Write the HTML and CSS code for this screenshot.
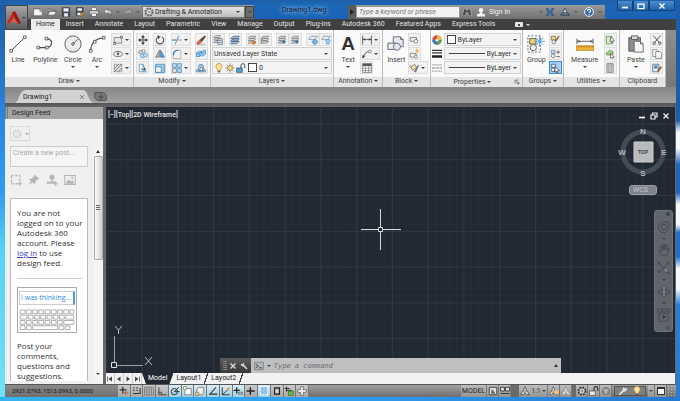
FILE: index.html
```html
<!DOCTYPE html>
<html lang="en">
<head>
<meta charset="utf-8">
<title>Drawing1.dwg</title>
<link rel="stylesheet" href="styles.css">
</head>
<body>
<svg class="defs" aria-hidden="true">
  <defs>
    <symbol id="new" viewBox="0 0 16 16"><path d="M1 3h10l4 4v7H1z" fill="#f4f4f4" stroke="#555"/><path d="M11 3v4h4" fill="#ccc" stroke="#666"/></symbol>
    <symbol id="open" viewBox="0 0 16 16"><path d="M1 3h5l1 2h5v3" fill="#ddd" stroke="#444"/><path d="M1 13L4 7h11l-3 6z" fill="#f2f2f2" stroke="#444"/></symbol>
    <symbol id="save" viewBox="0 0 16 16"><path d="M2 1h12v14H2z" fill="#46525e" stroke="#333"/><path d="M4 2h8v5H4zM5 10h6v5H5z" fill="#eef"/></symbol>
    <symbol id="saveas" viewBox="0 0 16 16"><path d="M2 1h11v12H2z" fill="#46525e" stroke="#333"/><path d="M4 2h7v4H4zM4 9h5v4H4z" fill="#eef"/><path d="M8 14l5-6 2 2-5 5z" fill="#f0a030" stroke="#704010" stroke-width=".6"/></symbol>
    <symbol id="print" viewBox="0 0 16 16"><path d="M4 1h8v5H4z" fill="#fff" stroke="#555"/><path d="M1 6h14v6H1z" fill="#e4e4e4" stroke="#444"/><path d="M4 10h8v5H4z" fill="#fff" stroke="#444"/></symbol>
    <symbol id="undo" viewBox="0 0 16 16"><path d="M2 7l5-5v3c5 0 7 3 7 9-2-4-4-5-7-5v3z" fill="#e8e8e8" stroke="#444" stroke-width=".8"/></symbol>
    <symbol id="redo" viewBox="0 0 16 16"><path d="M14 7L9 2v3c-5 0-7 3-7 9 2-4 4-5 7-5v3z" fill="#aaa" stroke="#666" stroke-width=".8"/></symbol>
    <symbol id="gear" viewBox="0 0 16 16"><circle cx="8" cy="8" r="6" fill="none" stroke="currentColor" stroke-width="2.4" stroke-dasharray="2.7 2"/><circle cx="8" cy="8" r="4.6" fill="#f5f5f5" stroke="currentColor"/><circle cx="8" cy="8" r="1.8" fill="none" stroke="currentColor"/></symbol>
    <symbol id="binoc" viewBox="0 0 16 16"><path d="M4 2h2.500v3h3V2H12l3 9v3h-5V9H6v5H1v-3z" fill="#444" stroke="#ddd" stroke-width=".7"/></symbol>
    <symbol id="user" viewBox="0 0 16 16"><circle cx="8" cy="5" r="3.600" fill="#f4f4f4"/><path d="M6.500 8h3v2l5 1.500V15h-13v-3.500l5-1.500z" fill="#f4f4f4"/></symbol>
    <symbol id="exchange" viewBox="0 0 16 16"><path d="M1 2h4l3 3 3-3h4l-4 6 4 6h-4l-3-3-3 3H1l4-6z" fill="#24508c"/><path d="M5 4l3 3 3-3M5 12l3-3 3 3" stroke="#a9c6ea" fill="none"/></symbol>
    <symbol id="cloudtri" viewBox="0 0 16 16"><path d="M8 2l3.500 7h-7z" fill="#dfe8f4" stroke="#23415f" stroke-width="1.300"/><path d="M4 9l-3 4h14l-3-4" fill="none" stroke="#23415f" stroke-width="1.600"/></symbol>
    <symbol id="help" viewBox="0 0 16 16"><circle cx="8" cy="8" r="7" fill="#3b6da5" stroke="#f4f4f4" stroke-width="1.500"/><path d="M5.500 6.200c0-3.200 5-3.200 5 0 0 2-2.500 1.600-2.500 3.600" stroke="#fff" stroke-width="1.700" fill="none"/><circle cx="8" cy="12" r="1" fill="#fff"/></symbol>
    <symbol id="line" viewBox="0 0 20 20"><path d="M2.500 17.500L17 3" stroke="#444" stroke-width="1.100"/><path d="M1 16h3v3H1zM16 1h3v3h-3z" fill="#eee" stroke="#444" stroke-width=".8"/></symbol>
    <symbol id="poly" viewBox="0 0 20 20"><path d="M3 14h9c7-1 7-9 0-10" fill="none" stroke="#444" stroke-width="1.200"/><path d="M1 12.500h3v3H1zM10.500 12.500h3v3h-3zM10 2.500h3v3h-3z" fill="#eee" stroke="#444" stroke-width=".8"/></symbol>
    <symbol id="circle" viewBox="0 0 20 20"><circle cx="10" cy="10" r="9" fill="#ececec" stroke="#555"/><path d="M10 10l6-6" stroke="#555"/><circle cx="10" cy="10" r="1.400" fill="#fff" stroke="#444"/></symbol>
    <symbol id="arc" viewBox="0 0 20 20"><path d="M3 18Q3 4 18 3" fill="none" stroke="#444" stroke-width="1.200"/><path d="M1.500 16h3v3h-3zM6 6h3v3H6zM16 1.500h3v3h-3z" fill="#eee" stroke="#444" stroke-width=".8"/></symbol>
    <symbol id="rect" viewBox="0 0 16 16"><path d="M2 4h12v9H2z" fill="#e9e9e9" stroke="#555"/><path d="M1 12h3v3H1zM12 2h3v3h-3z" fill="#fff" stroke="#333"/></symbol>
    <symbol id="ellipse" viewBox="0 0 16 16"><ellipse cx="8" cy="8" rx="7" ry="4.200" fill="#eee" stroke="#444"/><path d="M6 8h4M8 4v6" stroke="#333" stroke-width="1.400"/></symbol>
    <symbol id="hatch" viewBox="0 0 16 16"><path d="M2 2h12v12H2z" fill="#ddd" stroke="#555" stroke-dasharray="2 1"/><path d="M2 9l7-7M2 14L14 2M8 14l6-6" stroke="#555"/></symbol>
    <symbol id="move" viewBox="0 0 16 16"><path d="M8 2v12M2 8h12" stroke="#333" stroke-width="1.300"/><path d="M8 0l3 4H5zM8 16l3-4H5zM0 8l4-3v6zM16 8l-4-3v6z" fill="#333"/><path d="M6.500 6.500h3v3h-3z" fill="#fff" stroke="#333"/></symbol>
    <symbol id="rotate" viewBox="0 0 16 16"><path d="M5 3a6 6 0 1 0 6 0" fill="none" stroke="#555" stroke-width="1.800"/><path d="M4 0l5 2.500L5 7z" fill="#555"/></symbol>
    <symbol id="trim" viewBox="0 0 16 16"><path d="M0 8h7" stroke="#2c79b8" stroke-width="1.600"/><path d="M9 8h7" stroke="#555" stroke-width="1.200" stroke-dasharray="2 1"/><path d="M5 15L11 1" stroke="#2c79b8" stroke-width="1.200"/></symbol>
    <symbol id="erase" viewBox="0 0 16 16"><path d="M6 8l8-7 1.500 1.500L9 11z" fill="#6b4a30" stroke="#333" stroke-width=".7"/><path d="M1 12l5-4 3 3-4 4H2z" fill="#e3684c" stroke="#8a3a28" stroke-width=".7"/><path d="M6 15h8" stroke="#999"/></symbol>
    <symbol id="copy" viewBox="0 0 16 16"><circle cx="4" cy="5" r="3" fill="#ddd" stroke="#666"/><circle cx="9" cy="3.500" r="2.500" fill="#eee" stroke="#666"/><circle cx="7" cy="11" r="3" fill="#cfe5f8" stroke="#2c79b8"/><circle cx="12" cy="10" r="3" fill="#cfe5f8" stroke="#2c79b8"/></symbol>
    <symbol id="mirror" viewBox="0 0 16 16"><path d="M7 2v11H1z" fill="#bbb" stroke="#555"/><path d="M9 2v11h6z" fill="#5ba3de" stroke="#215f96"/></symbol>
    <symbol id="fillet" viewBox="0 0 16 16"><path d="M2 15V9q0-7 7-7h5v13z" fill="#f2f2f2" stroke="#999"/><path d="M2 10q0-8 8-8" stroke="#1f75bb" stroke-width="1.800" fill="none"/></symbol>
    <symbol id="explode" viewBox="0 0 16 16"><path d="M1 6l4-2h4v5l-3 3H1zM9 4l3-2h3v6l-3 3H9" fill="#a8d2f4" stroke="#1f75bb"/><path d="M1 7h5v5M6 7l3-3M10 6h3" stroke="#1f75bb" fill="none"/></symbol>
    <symbol id="stretch" viewBox="0 0 16 16"><path d="M2 2h6v12H2z" fill="#f7f7f7" stroke="#2c79b8"/><path d="M8 2l5 12H8" fill="#b8dcf7" stroke="#2c79b8"/><path d="M5 10h6M9 8l3 2-3 2" stroke="#222" fill="none"/></symbol>
    <symbol id="scale" viewBox="0 0 16 16"><path d="M1 2h14v13H1z" fill="#9fcdf0" stroke="#1f6eaf"/><path d="M1 6h9v9H1z" fill="#f5f5f5" stroke="#1f6eaf"/></symbol>
    <symbol id="array" viewBox="0 0 16 16"><path d="M1 1h6v6H1zM9 1h6v6H9zM9 9h6v6H9z" fill="#b8dcf7" stroke="#2c79b8"/><path d="M1 9h6v6H1z" fill="#eee" stroke="#555"/></symbol>
    <symbol id="offset" viewBox="0 0 16 16"><path d="M1 14h14v-3q-3 0-3-4 0-5-4-5T4 7q0 4-3 4z" fill="#a8d2f4" stroke="#1f6eaf"/><path d="M4 12q3-1 3-4 0-2 2-2t1 2q0 3 2 4z" fill="#fff" stroke="#444"/></symbol>
    <symbol id="layers" viewBox="0 0 16 16"><path d="M5 2h9l-3 3H2zM5 6h9l-3 3H2zM5 10h9l-3 3H2z" fill="#f5f5f5" stroke="#555"/><path d="M2 5v9" stroke="#555"/></symbol>
    <symbol id="lprops" viewBox="0 0 16 16"><path d="M4 1h8L9 4H1zM4 5h8L9 8H1zM4 9h4v3H1z" fill="#f5f5f5" stroke="#555"/><path d="M8 6h7v9H8z" fill="#e6f1fa" stroke="#456"/><path d="M9 9h5M9 12h5" stroke="#456"/></symbol>
    <symbol id="lblue" viewBox="0 0 16 16"><path d="M5 2h10l-4 4H1zM5 6h10l-4 4H1zM5 10h10l-4 4H1z" fill="#9fcdf0" stroke="#335"/></symbol>
    <symbol id="lorange" viewBox="0 0 16 16"><path d="M5 2h9l-3 3H2zM5 6h9l-3 3H2zM5 10h9l-3 3H2z" fill="#f5f5f5" stroke="#555"/><path d="M7 13l4-4 4 3-4 4z" fill="#d9772b"/></symbol>
    <symbol id="larrow" viewBox="0 0 16 16"><path d="M5 2h9l-3 3H2zM5 6h9l-3 3H2zM5 10h9l-3 3H2z" fill="#f5f5f5" stroke="#555"/><path d="M7 11l6-3v6z" fill="#1f75bb"/></symbol>
    <symbol id="lfreeze" viewBox="0 0 16 16"><path d="M4 2h11l-4 5H1z" fill="#eef4f8" stroke="#678"/><circle cx="11" cy="11" r="3.500" fill="#cfe9fb" stroke="#3187c6" stroke-width="1.500"/><path d="M11 6v10M6 11h10" stroke="#3187c6"/></symbol>
    <symbol id="loff" viewBox="0 0 16 16"><path d="M4 2h11l-4 5H1z" fill="#eef4f8" stroke="#678"/><path d="M9 12q-2-2-1-4 3-3 6 0 1 2-1 4v2H9z" fill="#a8d2f4" stroke="#3187c6"/></symbol>
    <symbol id="bulb" viewBox="0 0 16 16"><path d="M5.500 10Q3 8 3 5.500a5 5 0 0 1 10 0Q13 8 10.500 10v2h-5z" fill="#fbe39a" stroke="#a8803a"/><path d="M6 13.500h4M7 15.500h2" stroke="#555" stroke-width="1.500"/></symbol>
    <symbol id="sun" viewBox="0 0 16 16"><path d="M8 0v16M0 8h16M2.500 2.500l11 11M13.500 2.500l-11 11" stroke="#8a7a50"/><circle cx="8" cy="8" r="4" fill="#fbd98a" stroke="#7a6a40"/></symbol>
    <symbol id="lock" viewBox="0 0 16 16"><path d="M1 8h9v7H1z" fill="#5a9fd4" stroke="#1d4f7c"/><path d="M8 8V4q0-3 3-3t3 3v4" fill="none" stroke="#345" stroke-width="1.500"/></symbol>
    <symbol id="lockgray" viewBox="0 0 16 16"><path d="M1 8h9v7H1z" fill="#eee" stroke="#333"/><path d="M8 8V4q0-3 3-3t3 3v4" fill="none" stroke="#333" stroke-width="1.800"/></symbol>
    <symbol id="dim" viewBox="0 0 16 16"><path d="M1 1v14M15 1v14M1 7h14" stroke="#444" stroke-width="1.300"/><path d="M1 7l4-2v4zM15 7l-4-2v4z" fill="#444"/></symbol>
    <symbol id="leader" viewBox="0 0 16 16"><path d="M2 14Q5 4 11 4" fill="none" stroke="#444" stroke-width="1.300"/><circle cx="12.500" cy="4" r="2.300" fill="#fff" stroke="#444"/><path d="M0 15l1-6 4 3z" fill="#444"/></symbol>
    <symbol id="table" viewBox="0 0 16 16"><path d="M1 1h14v14H1z" fill="#fff" stroke="#555"/><path d="M1 1h14v4H1z" fill="#555"/><path d="M1 8.500h14M1 12h14M5.500 4v11M10.500 4v11" stroke="#777"/></symbol>
    <symbol id="insert" viewBox="0 0 20 20"><path d="M7 2h8l3 3v8H7z" fill="#e3e8ee" stroke="#667"/><path d="M1 9h9v7H1z" fill="#eef1f4" stroke="#556"/><circle cx="11" cy="13" r="4" fill="#dfe5eb" stroke="#667"/><path d="M15 2v3h3" stroke="#667" fill="none"/></symbol>
    <symbol id="bcreate" viewBox="0 0 16 16"><path d="M2 4h10v6H2z" fill="#eee" stroke="#555"/><circle cx="11" cy="10" r="3" fill="#f6f6f6" stroke="#555"/></symbol>
    <symbol id="bedit" viewBox="0 0 16 16"><path d="M2 7h9v6H2z" fill="#eee" stroke="#555"/><circle cx="11" cy="12" r="2.500" fill="#f6f6f6" stroke="#555"/><path d="M12 0l-2 4h3l-2 5 5-6h-3l2-3z" fill="#f0a030"/></symbol>
    <symbol id="battr" viewBox="0 0 16 16"><path d="M1 3l4 3M1 6l6 4" stroke="#555"/><path d="M3 7l6-5 3 5-6 5z" fill="#f6e0a8" stroke="#555"/><path d="M8 14l6-11 2 1-5 11z" fill="#777"/></symbol>
    <symbol id="wheel" viewBox="0 0 16 16"><circle cx="8" cy="8" r="7.500" fill="#d44"/><path d="M8 8L8 .500A7.500 7.500 0 0 1 15.500 8z" fill="#e8b93a"/><path d="M8 8h7.500A7.500 7.500 0 0 1 8 15.500z" fill="#58a044"/><path d="M8 8v7.500A7.500 7.500 0 0 1 .500 8z" fill="#3a76c4"/><circle cx="8" cy="8" r="2.500" fill="#eee"/></symbol>
    <symbol id="weights" viewBox="0 0 16 16"><path d="M0 2h16M0 6h16" stroke="#333" stroke-width="2"/><path d="M0 12h16" stroke="#222" stroke-width="4"/></symbol>
    <symbol id="ltypes" viewBox="0 0 16 16"><path d="M0 3h16" stroke="#777"/><path d="M0 8h16" stroke="#777" stroke-width="1.500" stroke-dasharray="5 1"/><path d="M0 13h16" stroke="#777" stroke-width="1.500" stroke-dasharray="2 1.500"/></symbol>
    <symbol id="group" viewBox="0 0 20 20"><path d="M1 1h14v18H1z" fill="none" stroke="#555" stroke-dasharray="2 2"/><path d="M3 4h7v6H3z" fill="#f6d66a" stroke="#555"/><circle cx="7" cy="14" r="3.500" fill="#f2f2f2" stroke="#555"/><path d="M14 1v12M8 7h12M10 3l8 8M18 3l-8 8" stroke="#4b9fdd"/></symbol>
    <symbol id="ungroup" viewBox="0 0 16 16"><path d="M2 2h7v6H2z" fill="#f6d66a" stroke="#555"/><circle cx="6" cy="11" r="3" fill="#eee" stroke="#555"/><path d="M8 9l6-8 1.500 1L10 10z" fill="#7a4e28"/></symbol>
    <symbol id="gedit" viewBox="0 0 16 16"><path d="M2 2h6v5H2z" fill="#cde" stroke="#569"/><circle cx="5" cy="11" r="3" fill="#eee" stroke="#555"/><path d="M10 5h6M13 2v6M10 12h6" stroke="#333"/></symbol>
    <symbol id="gsel" viewBox="0 0 16 16"><path d="M2 2h7v5H2z" fill="#def" stroke="#235"/><circle cx="5" cy="11" r="3" fill="#eee" stroke="#235"/><path d="M8 6l7 6-3 .500 1 3-2 .500-1-3-2 2z" fill="#fff" stroke="#222"/></symbol>
    <symbol id="measure" viewBox="0 0 20 20"><path d="M1 4v6M19 4v6M1 7h18" stroke="#555"/><path d="M1 7l3-1.500v3zM19 7l-3-1.500v3z" fill="#555"/><path d="M0 12h20v5H0z" fill="#f2b23c" stroke="#b37a18" stroke-width=".8"/><path d="M3 12v2M6 12v2M9 12v2M12 12v2M15 12v2M18 12v2" stroke="#8a5c10" stroke-width=".8"/></symbol>
    <symbol id="qsel" viewBox="0 0 16 16"><path d="M2 2h9v12H2z" fill="#cfe8c4" stroke="#3f7a33"/><path d="M9 3l6 6-3 .500 1 3-2 .500-1-3-1 1z" fill="#fff" stroke="#333"/></symbol>
    <symbol id="qcloud" viewBox="0 0 16 16"><path d="M2 9q-1-4 3-4 1-4 5-2 4 0 3 5-4 3-11 1z" fill="#a6cf95" stroke="#467a3a"/><path d="M9 7l6 6-3 .500v2l-2-2-1 1z" fill="#fff" stroke="#333"/></symbol>
    <symbol id="calc" viewBox="0 0 16 16"><path d="M3 1h10v14H3z" fill="#ddd" stroke="#555"/><path d="M5 3h6v3H5z" fill="#fff" stroke="#666"/><path d="M5 8.500h6M5 11h6M5 13h6" stroke="#666" stroke-dasharray="1.500 .7"/></symbol>
    <symbol id="paste" viewBox="0 0 20 20"><path d="M2 3h13v15H2z" fill="#8d8d8d" stroke="#555"/><path d="M5 1h7v4H5z" fill="#ddd" stroke="#555"/><path d="M8 7h7l3 3v9H8z" fill="#f6f6f6" stroke="#666"/><path d="M15 7v3h3" fill="none" stroke="#666"/></symbol>
    <symbol id="cut" viewBox="0 0 16 16"><path d="M2 1l9 10M14 1L5 11" stroke="#444" stroke-width="1.400"/><circle cx="3.500" cy="13" r="2" fill="none" stroke="#444" stroke-width="1.300"/><circle cx="12.500" cy="13" r="2" fill="none" stroke="#444" stroke-width="1.300"/></symbol>
    <symbol id="copyclip" viewBox="0 0 16 16"><path d="M1 1h7l2 2v9H1z" fill="#f5f5f5" stroke="#666"/><path d="M6 4h6l3 3v8H6z" fill="#fafafa" stroke="#555"/></symbol>
    <symbol id="match" viewBox="0 0 16 16"><path d="M1 2h10v12H1z" fill="#e6eef6" stroke="#345"/><path d="M3 4h6v5H3z" fill="#4f8ec4"/><path d="M8 12l6-7 2 2-6 7z" fill="#8a5a2e"/></symbol>
    <symbol id="x" viewBox="0 0 16 16"><path d="M3 3l10 10M13 3L3 13" stroke="currentColor" stroke-width="2.500"/></symbol>
    <symbol id="sq" viewBox="0 0 16 16"><path d="M2 4h12v9H2z" fill="none" stroke="currentColor" stroke-width="2.500"/></symbol>
    <symbol id="min" viewBox="0 0 16 16"><path d="M2 11h12" stroke="currentColor" stroke-width="3.500"/></symbol>
    <symbol id="restore" viewBox="0 0 16 16"><path d="M5 6V2h9v8h-4M2 6h8v8H2z" fill="none" stroke="currentColor" stroke-width="2.400"/></symbol>
    <symbol id="plus" viewBox="0 0 16 16"><path d="M8 3v10M3 8h10" stroke="currentColor" stroke-width="2"/></symbol>
    <symbol id="select" viewBox="0 0 16 16"><path d="M2 2h11v11H2z" fill="none" stroke="currentColor" stroke-width="1.800" stroke-dasharray="3 2"/><path d="M13 10v6M10 13h6" stroke="currentColor" stroke-width="1.600"/></symbol>
    <symbol id="pin" viewBox="0 0 16 16"><path d="M9 1l6 5-2 1-3 3-1 4-3-3-5 4 3-6-3-2 4-1 3-3z" fill="currentColor"/></symbol>
    <symbol id="stamp" viewBox="0 0 16 16"><circle cx="8" cy="4" r="3.500" fill="currentColor"/><path d="M7 6h2v4h4v3H1v-3h6z" fill="currentColor"/><path d="M13 10v6M10 13h6" stroke="currentColor" stroke-width="1.600"/></symbol>
    <symbol id="image" viewBox="0 0 16 16"><path d="M1 2h14v12H1z" fill="none" stroke="currentColor" stroke-width="1.400"/><path d="M2 13l4-6 3 3 2-2 3 5z" fill="currentColor"/><circle cx="11" cy="5" r="1.500" fill="currentColor"/></symbol>
    <symbol id="wrench" viewBox="0 0 16 16"><path d="M14 14L7 7" stroke="currentColor" stroke-width="2.800"/><path d="M7 2L5 5 2 4Q2 9 7 8.500 9 6 7 2z" fill="currentColor" stroke="currentColor"/></symbol>
    <symbol id="wrenchr" viewBox="0 0 16 16"><path d="M2 14L9 7" stroke="#e6e6e6" stroke-width="2.800"/><path d="M9 2l2 3 3-1q0 5-5 4.500Q7 6 9 2z" fill="#e6e6e6" stroke="#e6e6e6"/></symbol>
    <symbol id="wheelnav" viewBox="0 0 20 20"><path d="M9 3h8v8a7.500 7.500 0 1 1-8-8z" fill="none" stroke="#43474e" stroke-width="1.300"/><circle cx="10" cy="10" r="4" fill="none" stroke="#43474e" stroke-width="1.300"/></symbol>
    <symbol id="hand" viewBox="0 0 20 20"><path d="M7 18L2 11l2-1 3 2-2-8 2-.500 2 6V2h2v7l2-6 2 .500-1 7 2-3 2 .500-4 10z" fill="none" stroke="#43474e" stroke-width="1.300"/></symbol>
    <symbol id="zoomnav" viewBox="0 0 20 20"><path d="M2 2l13 13M17 2L2 16M2 5V2h3M14 2h3v3M2 13v3h3" fill="none" stroke="#43474e" stroke-width="1.300"/><circle cx="13" cy="13" r="3.500" fill="#7b7f86" stroke="#43474e"/><path d="M15 16l4 3" stroke="#43474e" stroke-width="2"/></symbol>
    <symbol id="orbit" viewBox="0 0 20 20"><ellipse cx="10" cy="10" rx="8" ry="3" fill="none" stroke="#43474e" stroke-width="1.500"/><path d="M8 17V5H6l4-4 4 4h-2v12z" fill="#7b7f86" stroke="#43474e"/></symbol>
    <symbol id="motion" viewBox="0 0 20 20"><path d="M1 1h5v5H1zM8 1h5v5H8zM15 1h4v5h-4zM3 8h13v11H3z" fill="none" stroke="#43474e" stroke-width="1.200"/><path d="M8 10l5 3-5 3z" fill="#35393f"/></symbol>
    <symbol id="grid" viewBox="0 0 16 16"><path d="M1 2h14v12H1z" fill="#fff"/><path d="M1 2v12M4.500 2v12M8 2v12M11.500 2v12M15 2v12M1 2h14M1 5h14M1 8h14M1 11h14M1 14h14" stroke="#444"/></symbol>
    <symbol id="infer" viewBox="0 0 16 16"><path d="M6 1v11M1 6h11" stroke="#333" stroke-width="2"/><path d="M11 7v8M7 11h8" stroke="#b05a3a" stroke-width="1.400"/></symbol>
    <symbol id="dyn" viewBox="0 0 16 16"><path d="M6 2v10M1 7h10" stroke="#222" stroke-width="2"/><path d="M9 10h6v3H9z" fill="#dfe6ea" stroke="#333"/></symbol>
    <symbol id="snap" viewBox="0 0 16 16"><path d="M2 3h2M7 3h2M2 7h2M7 7h2M2 12h11V3" fill="none" stroke="#333" stroke-width="1.700"/></symbol>
    <symbol id="ortho" viewBox="0 0 16 16"><path d="M3 2v12h12M3 10h4v4" fill="none" stroke="#444" stroke-width="1.500"/></symbol>
    <symbol id="polar" viewBox="0 0 16 16"><circle cx="7" cy="9" r="5" fill="none" stroke="#333" stroke-width="1.600"/><path d="M7 9l7-7M7 9h8" stroke="#222" stroke-width="1.400"/></symbol>
    <symbol id="osnap" viewBox="0 0 16 16"><path d="M3 4h10v10H3z" fill="#fff" stroke="#555"/><path d="M1 1h5v5H1z" fill="#ffc" stroke="#765"/></symbol>
    <symbol id="osnap3" viewBox="0 0 16 16"><path d="M3 5l3-3h8v9l-3 3H3z" fill="#eee" stroke="#555"/><path d="M1 10h5v5H1z" fill="#f3d78b" stroke="#765"/></symbol>
    <symbol id="angle" viewBox="0 0 16 16"><path d="M13 2L3 13h12" fill="none" stroke="#333" stroke-width="1.700"/></symbol>
    <symbol id="ducs" viewBox="0 0 16 16"><path d="M2 2v12h12M2 14L12 5" fill="none" stroke="#333" stroke-width="1.500"/><path d="M12 1l3 3-3 3-3-3z" fill="#f3a63b"/></symbol>
    <symbol id="cross" viewBox="0 0 16 16"><path d="M7 2v12M1 8h13" stroke="#222" stroke-width="2.200"/></symbol>
    <symbol id="tpy" viewBox="0 0 16 16"><path d="M2 1h12v13H2z" fill="#a9cdf0" stroke="#fff" stroke-width="1.500"/><path d="M2 5l4-4M2 10l9-9M3 14L14 3M8 14l6-6" stroke="#4f86bd"/></symbol>
    <symbol id="qp" viewBox="0 0 16 16"><path d="M4 3h8v10H4z" fill="#aaa" stroke="#222" stroke-width="1.800"/><path d="M6 6h4v5H6z" fill="#ddd"/></symbol>
    <symbol id="sc" viewBox="0 0 16 16"><path d="M4 1v8M1 4h8M5 7h7" stroke="#333" stroke-width="1.600"/><path d="M7 8h8v7H7z" fill="#6db14c" stroke="#2e6b1b"/></symbol>
    <symbol id="am" viewBox="0 0 16 16"><path d="M6 1h4v5h5v4h-5v5H6v-5H1V6h5z" fill="#fff" stroke="#444"/></symbol>
    <symbol id="man" viewBox="0 0 16 16"><path d="M8 1L5 8h6zM5 8l-4 6h4l3-4 3 4h4l-4-6" fill="#eee" stroke="currentColor" stroke-width="1.100"/></symbol>
    <symbol id="manlit" viewBox="0 0 16 16"><path d="M7 1L4 8h6zM4 8l-3 6h3l3-4 3 4h4l-4-6" fill="#eee" stroke="#444" stroke-width="1.100"/><circle cx="12" cy="10" r="3.500" fill="#f7c566"/></symbol>
    <symbol id="page" viewBox="0 0 16 16"><path d="M2 2h12v12H2z" fill="#ddd" stroke="#444" stroke-width="1.500"/><path d="M6 5l6 7H5z" fill="#555"/></symbol>
    <symbol id="views" viewBox="0 0 16 16"><path d="M1 2h6v6H1zM9 2h6v6H9zM1 12h14" fill="#eee" stroke="#333" stroke-width="1.500"/></symbol>
    <symbol id="ball" viewBox="0 0 16 16"><circle cx="8" cy="8" r="6" fill="#8b8b8b" stroke="#666"/><path d="M4 5l4 3 4-3M8 8v5" stroke="#ddd" fill="none" stroke-width="1.500"/></symbol>
    <symbol id="prompt" viewBox="0 0 16 16"><path d="M1 2h14v12H1z" fill="#b4b8bb" stroke="#666"/><path d="M3 5l4 3-4 3M8 11h5" fill="none" stroke="#444" stroke-width="1.500"/></symbol>
    <symbol id="first" viewBox="0 0 16 16"><path d="M3 3v10" stroke="#444" stroke-width="1.500"/><path d="M12 3v10L5 8z" fill="#444"/></symbol>
    <symbol id="prev" viewBox="0 0 16 16"><path d="M11 3v10L4 8z" fill="#444"/></symbol>
    <symbol id="next" viewBox="0 0 16 16"><path d="M5 3v10l7-5z" fill="#444"/></symbol>
    <symbol id="last" viewBox="0 0 16 16"><path d="M13 3v10" stroke="#444" stroke-width="1.500"/><path d="M4 3v10l7-5z" fill="#444"/></symbol>
    <symbol id="launch" viewBox="0 0 16 16"><path d="M3 12V3h9M6 6l7 7M13 8v5H8" stroke="#555" stroke-width="2" fill="none"/></symbol>
    <symbol id="keys" viewBox="0 0 58 24"><g fill="#fff" stroke="#999" stroke-width=".8"><path d="M1 1h5v4H1zM7.500 1h5v4h-5zM14 1h5v4h-5zM20.500 1h5v4h-5zM27 1h5v4h-5zM33.500 1h5v4h-5zM40 1h5v4h-5zM46.500 1h5v4h-5zM53 1h4v4h-4zM1 6.500h7v4H1zM9.500 6.500h5v4h-5zM16 6.500h5v4h-5zM22.500 6.500h5v4h-5zM29 6.500h5v4h-5zM35.500 6.500h5v4h-5zM42 6.500h5v4h-5zM48.500 6.500h8.500v4h-8.500zM1 12h5v4H1zM7.500 12h5v4h-5zM14 12h5v4h-5zM20.500 12h5v4h-5zM27 12h5v4h-5zM33.500 12h5v4h-5zM40 12h5v4h-5zM46.500 12h10.500v4H46.500zM1 17.500h5v4H1zM7.500 17.500h5v4h-5zM14 17.500h26v4H14zM41.500 17.500h5v4h-5zM48 17.500h5v4h-5z"/></g></symbol>
  </defs>
</svg>

<div class="window">
  <header class="top">
    <button class="appbtn" aria-label="Application menu">
      <svg class="logo" viewBox="0 0 20 20"><path d="M8 1h4l-3 10-6 7H0z" fill="#c8281e"/><path d="M8 1h4l8 17h-5L11 10z" fill="#a3140f"/><path d="M3 18l7-7 7 7-7-3z" fill="#ec5a43"/></svg>
      <i class="caret"></i>
    </button>
    <div class="bars">
      <div class="titlebar">
        <div class="qat">
          <button aria-label="New"><svg class="s10"><use href="#new"/></svg></button>
          <button aria-label="Open"><svg class="s10"><use href="#open"/></svg></button>
          <button aria-label="Save"><svg class="s10"><use href="#save"/></svg></button>
          <button aria-label="Save as"><svg class="s10"><use href="#saveas"/></svg></button>
          <button aria-label="Plot"><svg class="s10"><use href="#print"/></svg></button>
          <button class="wide" aria-label="Undo"><svg class="s10"><use href="#undo"/></svg><i class="caret dim"></i></button>
          <button class="wide" aria-label="Redo"><svg class="s10"><use href="#redo"/></svg><i class="caret dim"></i></button>
          <span class="workspace"><svg class="s10"><use href="#gear"/></svg><select aria-label="Workspace"><option>Drafting &amp; Annotation</option></select><i class="caret"></i></span>
          <button class="more" aria-label="Customize toolbar"><i class="caret"></i></button>
        </div>
        <h1 class="title">Drawing1.dwg</h1>
        <div class="info">
          <button class="expand" aria-label="Collapse search"><i class="tri"></i></button>
          <input type="text" class="search" aria-label="Search" placeholder="Type a keyword or phrase">
          <button aria-label="Find"><svg class="s10"><use href="#binoc"/></svg></button>
          <button class="signin"><svg class="s10"><use href="#user"/></svg>Sign In</button>
          <i class="caret dim"></i>
          <button aria-label="Exchange"><svg class="s10"><use href="#exchange"/></svg></button>
          <button class="wide" aria-label="Stay connected"><svg class="s10"><use href="#cloudtri"/></svg><i class="caret dim"></i></button>
          <button class="wide" aria-label="Help"><svg class="s10"><use href="#help"/></svg><i class="caret dim"></i></button>
        </div>
        <div class="winbtns">
          <button aria-label="Minimize"><svg class="s8"><use href="#min"/></svg></button>
          <button aria-label="Maximize"><svg class="s8"><use href="#sq"/></svg></button>
          <button class="close" aria-label="Close"><svg class="s8"><use href="#x"/></svg></button>
        </div>
      </div>
      <nav class="tabs">
        <a href="#" class="on">Home</a><a href="#">Insert</a><a href="#">Annotate</a><a href="#">Layout</a><a href="#">Parametric</a><a href="#">View</a><a href="#">Manage</a><a href="#">Output</a><a href="#">Plug-ins</a><a href="#">Autodesk 360</a><a href="#">Featured Apps</a><a href="#">Express Tools</a>
        <button class="ribmin" aria-label="Minimize ribbon"><span class="pill"><i class="dot"></i></span><i class="caret light"></i></button>
      </nav>
    </div>
  </header>

  <section class="ribbon">
    <div class="panel draw">
      <div class="body">
        <div class="bigs">
          <button class="big"><svg class="s20"><use href="#line"/></svg>Line</button>
          <button class="big"><svg class="s20"><use href="#poly"/></svg>Polyline</button>
          <button class="big"><svg class="s20"><use href="#circle"/></svg>Circle<i class="caret"></i></button>
          <button class="big"><svg class="s20"><use href="#arc"/></svg>Arc<i class="caret"></i></button>
        </div>
        <div class="col">
          <button class="sm split" aria-label="Rectangle"><svg class="s10"><use href="#rect"/></svg><i class="caret"></i></button>
          <button class="sm split" aria-label="Ellipse"><svg class="s10"><use href="#ellipse"/></svg><i class="caret"></i></button>
          <button class="sm split" aria-label="Hatch"><svg class="s10"><use href="#hatch"/></svg><i class="caret"></i></button>
        </div>
      </div>
      <h2>Draw <i class="caret"></i></h2>
    </div>
    <div class="panel modify">
      <div class="body">
        <div class="col"><button class="sm" aria-label="Move"><svg class="s10"><use href="#move"/></svg></button><button class="sm" aria-label="Copy"><svg class="s10"><use href="#copy"/></svg></button><button class="sm" aria-label="Stretch"><svg class="s10"><use href="#stretch"/></svg></button></div>
        <div class="col"><button class="sm" aria-label="Rotate"><svg class="s10"><use href="#rotate"/></svg></button><button class="sm" aria-label="Mirror"><svg class="s10"><use href="#mirror"/></svg></button><button class="sm" aria-label="Scale"><svg class="s10"><use href="#scale"/></svg></button></div>
        <div class="col"><button class="sm split" aria-label="Trim"><svg class="s10"><use href="#trim"/></svg><i class="caret"></i></button><button class="sm split" aria-label="Fillet"><svg class="s10"><use href="#fillet"/></svg><i class="caret"></i></button><button class="sm split" aria-label="Array"><svg class="s10"><use href="#array"/></svg><i class="caret"></i></button></div>
        <div class="col"><button class="sm" aria-label="Erase"><svg class="s10"><use href="#erase"/></svg></button><button class="sm" aria-label="Explode"><svg class="s10"><use href="#explode"/></svg></button><button class="sm" aria-label="Offset"><svg class="s10"><use href="#offset"/></svg></button></div>
      </div>
      <h2>Modify <i class="caret"></i></h2>
    </div>
    <div class="panel layers">
      <div class="body">
        <div class="col grow">
          <div class="lrow">
            <button class="sm" aria-label="Layer properties"><svg class="s10"><use href="#lprops"/></svg></button>
            <button class="sm" aria-label="Make current"><svg class="s10"><use href="#lblue"/></svg></button>
            <span class="pair"><button class="sm" aria-label="Match layer"><svg class="s10"><use href="#lorange"/></svg></button><button class="sm" aria-label="Previous layer"><svg class="s10"><use href="#layers"/></svg></button></span>
            <span class="pair"><button class="sm" aria-label="Isolate"><svg class="s10"><use href="#larrow"/></svg></button><button class="sm" aria-label="Unisolate"><svg class="s10"><use href="#larrow"/></svg></button></span>
            <span class="pair"><button class="sm" aria-label="Freeze"><svg class="s10"><use href="#lfreeze"/></svg></button><button class="sm" aria-label="Layer off"><svg class="s10"><use href="#loff"/></svg></button></span>
          </div>
          <span class="combo"><select aria-label="Layer state"><option>Unsaved Layer State</option></select><i class="caret"></i></span>
          <span class="combo"><svg class="s10"><use href="#bulb"/></svg><svg class="s10"><use href="#sun"/></svg><svg class="s10"><use href="#lock"/></svg><i class="swatch"></i><select aria-label="Layer"><option>0</option></select><i class="caret"></i></span>
        </div>
      </div>
      <h2>Layers <i class="caret"></i></h2>
    </div>
    <div class="panel anno">
      <div class="body">
        <button class="big"><span class="glyph">A</span>Text<i class="caret"></i></button>
        <div class="col">
          <button class="sm split" aria-label="Dimension"><svg class="s10"><use href="#dim"/></svg><i class="caret"></i></button>
          <button class="sm split" aria-label="Leader"><svg class="s10"><use href="#leader"/></svg><i class="caret"></i></button>
          <button class="sm" aria-label="Table"><svg class="s10"><use href="#table"/></svg></button>
        </div>
      </div>
      <h2>Annotation <i class="caret"></i></h2>
    </div>
    <div class="panel block">
      <div class="body">
        <button class="big"><svg class="s20"><use href="#insert"/></svg>Insert</button>
        <div class="col">
          <button class="sm" aria-label="Create block"><svg class="s10"><use href="#bcreate"/></svg></button>
          <button class="sm" aria-label="Edit block"><svg class="s10"><use href="#bedit"/></svg></button>
          <button class="sm split" aria-label="Edit attributes"><svg class="s10"><use href="#battr"/></svg><i class="caret"></i></button>
        </div>
      </div>
      <h2>Block <i class="caret"></i></h2>
    </div>
    <div class="panel props">
      <div class="body">
        <div class="col grow">
          <div class="prow"><svg class="s10"><use href="#wheel"/></svg><span class="combo"><i class="swatch"></i><select aria-label="Color"><option>ByLayer</option></select><i class="caret"></i></span></div>
          <div class="prow"><svg class="s10"><use href="#weights"/></svg><span class="combo"><i class="rule"></i><select aria-label="Lineweight"><option>ByLayer</option></select><i class="caret"></i></span></div>
          <div class="prow"><svg class="s10"><use href="#ltypes"/></svg><span class="combo"><i class="rule"></i><select aria-label="Linetype"><option>ByLayer</option></select><i class="caret"></i></span></div>
        </div>
      </div>
      <h2 class="launcher"><span>Properties <i class="caret"></i></span><svg class="s6"><use href="#launch"/></svg></h2>
    </div>
    <div class="panel groups">
      <div class="body">
        <button class="big"><svg class="s20"><use href="#group"/></svg>Group</button>
        <div class="col">
          <button class="sm" aria-label="Ungroup"><svg class="s10"><use href="#ungroup"/></svg></button>
          <button class="sm" aria-label="Group edit"><svg class="s10"><use href="#gedit"/></svg></button>
          <button class="sm active" aria-label="Group selection"><svg class="s10"><use href="#gsel"/></svg></button>
        </div>
      </div>
      <h2>Groups <i class="caret"></i></h2>
    </div>
    <div class="panel utils">
      <div class="body">
        <button class="big"><svg class="s20"><use href="#measure"/></svg>Measure<i class="caret"></i></button>
        <div class="col">
          <button class="sm" aria-label="Quick select"><svg class="s10"><use href="#qsel"/></svg></button>
          <button class="sm" aria-label="Select similar"><svg class="s10"><use href="#qcloud"/></svg></button>
          <button class="sm" aria-label="Calculator"><svg class="s10"><use href="#calc"/></svg></button>
        </div>
      </div>
      <h2>Utilities <i class="caret"></i></h2>
    </div>
    <div class="panel clip">
      <div class="body">
        <button class="big"><svg class="s20"><use href="#paste"/></svg>Paste<i class="caret"></i></button>
        <div class="col">
          <button class="sm" aria-label="Cut"><svg class="s10"><use href="#cut"/></svg></button>
          <button class="sm" aria-label="Copy to clipboard"><svg class="s10"><use href="#copyclip"/></svg></button>
          <button class="sm" aria-label="Match properties"><svg class="s10"><use href="#match"/></svg></button>
        </div>
      </div>
      <h2>Clipboard</h2>
    </div>
  </section>

  <div class="filetabs">
    <a href="#" class="filetab"><svg class="tabshape" viewBox="0 0 80 13" preserveAspectRatio="none"><path d="M0 13Q3 13 5 7T11 0H69Q72 0 74 6T80 13z" fill="#d2d2d2"/></svg><span>Drawing1</span><svg class="s8"><use href="#x"/></svg></a>
    <button class="newtab" aria-label="New tab"><svg class="s8"><use href="#plus"/></svg></button>
  </div>

  <main class="work">
    <aside class="palette">
      <h2 class="phead">Design Feed</h2>
      <div class="pbody">
        <div class="feed">
          <button class="settings" aria-label="Settings"><svg class="s10"><use href="#gear"/></svg><i class="caret"></i></button>
          <textarea class="post" aria-label="New post" placeholder="Create a new post..."></textarea>
          <div class="tools">
            <button aria-label="Select area"><svg class="s12"><use href="#select"/></svg></button>
            <button aria-label="Pin"><svg class="s12"><use href="#pin"/></svg></button>
            <button aria-label="Tag person"><svg class="s12"><use href="#stamp"/></svg></button>
            <button aria-label="Add image"><svg class="s12"><use href="#image"/></svg></button>
          </div>
          <div class="card">
            <p>You are not<br>logged on to your<br>Autodesk 360<br>account. Please<br><a href="#">log in</a> to use<br>design feed.</p>
            <hr>
            <div class="typing"><div class="bubble">I was thinking...</div><svg class="keys"><use href="#keys"/></svg></div>
            <p>Post your<br>comments,<br>questions and<br>suggestions.</p>
          </div>
        </div>
        <div class="scroll"><i class="up"></i><span class="thumb"></span><i class="caret"></i></div>
      </div>
    </aside>

    <div class="stage">
      <div class="canvas">
        <svg class="gridlines" aria-hidden="true">
          <defs>
            <pattern id="minor" width="7.154" height="7.154" x="35.500" y="16.500" patternUnits="userSpaceOnUse"><path d="M.500 0v8M0 .500h8" stroke="#252d37" fill="none"/></pattern>
            <pattern id="major" width="35.770" height="35.770" x="35.500" y="16.500" patternUnits="userSpaceOnUse"><path d="M.500 0v36M0 .500h36" stroke="#2e3743" fill="none"/></pattern>
          </defs>
          <rect width="100%" height="100%" fill="url(#minor)"/><rect width="100%" height="100%" fill="url(#major)"/>
        </svg>
        <div class="viewlabel">[&minus;][Top][2D Wireframe]</div>
        <div class="viewbtns"><svg class="s8"><use href="#min"/></svg><svg class="s8"><use href="#restore"/></svg><svg class="s8"><use href="#x"/></svg></div>
        <svg class="cube" viewBox="0 0 52 54">
          <circle cx="26" cy="27" r="20" fill="none" stroke="#454c56" stroke-width="5"/>
          <path d="M17 17h19v20H17z" fill="#b9babb" stroke="#d0d0d0"/>
          <text x="26" y="29" class="face">TOP</text>
          <text x="26" y="9" class="dir">N</text><text x="26" y="51" class="dir">S</text><text x="5" y="30" class="dir">W</text><text x="47" y="30" class="dir">E</text>
        </svg>
        <button class="wcs">WCS</button>
        <div class="navbar">
          <svg class="s16"><use href="#wheelnav"/></svg><i class="caret"></i>
          <svg class="s16"><use href="#hand"/></svg>
          <svg class="s16"><use href="#zoomnav"/></svg><i class="caret"></i>
          <svg class="s16"><use href="#orbit"/></svg><i class="caret"></i>
          <svg class="s16"><use href="#motion"/></svg>
          <i class="knob top"></i><i class="knob bottom"></i>
        </div>
        <svg class="cursor" viewBox="0 0 41 41"><path d="M19.500 0v18M19.500 23v18M0 20.500h17M22 20.500h18M17.500 18.500h4v4h-4z" fill="none" stroke="#d6d8da"/></svg>
        <svg class="ucs" viewBox="0 0 46 46"><path d="M4.500 11v27M7 40.500h26" stroke="#9b9fa3"/><path d="M1.500 37.500h5v5h-5z" fill="none" stroke="#ddd"/><path d="M5 1l3.500 4L12 1M8.500 5v4M35 32l7 8M42 32l-7 8" fill="none" stroke="#b5b8bb"/></svg>
        <div class="command">
          <div class="cgrip"><i class="dots"></i><button aria-label="Close"><svg class="s8"><use href="#x"/></svg></button><button aria-label="Customize"><svg class="s8"><use href="#wrench"/></svg></button></div>
          <svg class="s10"><use href="#prompt"/></svg><i class="caret"></i>
          <input type="text" aria-label="Command" placeholder="Type a command">
          <i class="up"></i>
        </div>
      </div>
      <div class="layouts">
        <button aria-label="First"><svg class="s8"><use href="#first"/></svg></button><button aria-label="Previous"><svg class="s8"><use href="#prev"/></svg></button><button aria-label="Next"><svg class="s8"><use href="#next"/></svg></button><button aria-label="Last"><svg class="s8"><use href="#last"/></svg></button>
        <a href="#" class="model">Model</a><a href="#">Layout1</a><i class="slash"></i><a href="#">Layout2</a><i class="slash"></i>
      </div>
    </div>
  </main>

  <footer class="status">
    <output class="coords">2921.0793, 1513.0993, 0.0000</output>
    <div class="toggles">
      <button aria-label="Infer"><svg class="s10"><use href="#infer"/></svg></button>
      <button aria-label="Snap"><svg class="s10"><use href="#snap"/></svg></button>
      <button aria-label="Grid"><svg class="s10"><use href="#grid"/></svg></button>
      <button aria-label="Ortho"><svg class="s10"><use href="#ortho"/></svg></button>
      <button class="on" aria-label="Polar"><svg class="s10"><use href="#polar"/></svg></button>
      <button class="on" aria-label="Object snap"><svg class="s10"><use href="#osnap"/></svg></button>
      <button class="on" aria-label="3D object snap"><svg class="s10"><use href="#osnap3"/></svg></button>
      <button class="on" aria-label="Tracking"><svg class="s10"><use href="#angle"/></svg></button>
      <button class="on" aria-label="Dynamic UCS"><svg class="s10"><use href="#ducs"/></svg></button>
      <button class="on" aria-label="Dynamic input"><svg class="s10"><use href="#dyn"/></svg></button>
      <button aria-label="Lineweight"><svg class="s10"><use href="#cross"/></svg></button>
      <button class="on" aria-label="Transparency"><svg class="s10"><use href="#tpy"/></svg></button>
      <button aria-label="Quick properties"><svg class="s10"><use href="#qp"/></svg></button>
      <button aria-label="Selection cycling"><svg class="s10"><use href="#sc"/></svg></button>
      <button aria-label="Annotation monitor"><svg class="s10"><use href="#am"/></svg></button>
    </div>
    <div class="right">
      <button class="mode">MODEL</button>
      <button aria-label="Quick view layouts"><svg class="s10"><use href="#page"/></svg></button>
      <button aria-label="Quick view drawings"><svg class="s10"><use href="#views"/></svg></button>
      <i class="gap"></i><i class="gap"></i>
      <button class="ratio"><svg class="s10"><use href="#man"/></svg>1:1<i class="caret"></i></button>
      <button aria-label="Annotation visibility"><svg class="s10"><use href="#manlit"/></svg></button>
      <button class="off" aria-label="Auto scale"><svg class="s10"><use href="#man"/></svg></button>
      <i class="gap"></i>
      <button aria-label="Workspace switching"><svg class="s10"><use href="#gear"/></svg></button>
      <button aria-label="Lock toolbars"><svg class="s10"><use href="#lockgray"/></svg></button>
      <button aria-label="Hardware acceleration"><svg class="s10"><use href="#ball"/></svg></button>
      <div class="tray"><svg class="s10"><use href="#wrenchr"/></svg><svg class="s10"><use href="#bulb"/></svg></div>
      <button class="menu" aria-label="Status menu"><i class="caret"></i></button>
      <button aria-label="Clean screen"><i class="screen"></i></button>
      <i class="grip"></i>
    </div>
  </footer>
</div>
</body>
</html>
```
FILE: styles.css
```css
* { box-sizing: border-box; margin: 0; padding: 0; }
html, body { height: 100%; }
body {
  font: 7px/10px Roboto, "Open Sans", sans-serif;
  color: #333;
  overflow: hidden;
}
button, input, select, textarea { font: inherit; color: inherit; border: 0; background: none; border-radius: 0; outline: 0; }
select { appearance: none; flex: 1; min-width: 0; }
button { display: flex; align-items: center; justify-content: center; flex: none; }
a { color: inherit; text-decoration: none; }
h1, h2 { font-size: 7px; font-weight: 400; }
svg { flex: none; display: block; }
i { flex: none; }
.defs { position: absolute; width: 0; height: 0; }
.s6 { width: 6px; height: 6px; }
.s8 { width: 8px; height: 8px; }
.s10 { width: 10px; height: 10px; }
.s12 { width: 12px; height: 12px; }
.s16 { width: 14px; height: 14px; }
.s20 { width: 18px; height: 18px; }
.caret { display: inline-block; border: 2px solid transparent; border-top: 2px solid #444; border-bottom: 0; vertical-align: middle; }
.caret.dim { opacity: .6; }
.caret.light { border-top-color: #ddd; }
.tri { border: 3px solid transparent; border-left: 4px solid #222; border-right: 0; }
.up { border: 2px solid transparent; border-bottom: 3px solid #333; border-top: 0; }

.window {
  height: 100vh;
  display: flex;
  flex-direction: column;
  padding: 5px 4px 4px 5px;
  background:
    linear-gradient(#1f5fa8, #1c66b4) top / 100% 5px no-repeat,
    linear-gradient(90deg, #35b5ee, #2e9df0 50%, #2678d0) bottom / 100% 4px no-repeat,
    linear-gradient(#1c5aa0, #2a86e0 30%, #2e9df2 48%, #55d2f6 62%, #6ee2f8) left / 5px 100% no-repeat,
    linear-gradient(#1d5ea8 30%, #f4fbff 33%, #f4fbff 37%, #1f66b8 41%, #1f66b8 48%, #f4fbff 51%, #f4fbff 56%, #2470c4 58%, #2470c4 64%, #f4fbff 67%, #f4fbff 72%, #2a7ed2 76%) right / 5px 100% no-repeat;
}

/* title bar and ribbon tabs */
.top { display: flex; height: 25px; background: #404040; }
.appbtn { width: 23px; gap: 1px; background: linear-gradient(#a5a5a5, #5d5d5d); border: 1px solid #444; }
.logo { width: 14px; height: 16px; }
.bars { flex: 1; min-width: 0; display: flex; flex-direction: column; }
.titlebar { display: flex; height: 14px; background: linear-gradient(#1c66b4, #1a62b8); }
.qat, .info { display: flex; align-items: center; background: linear-gradient(#999, #707070); }
.qat { padding-left: 3px; }
.qat button { width: 14px; }
.qat .wide { width: 20px; gap: 3px; }
.workspace { display: flex; align-items: center; gap: 1px; width: 103px; height: 12px; margin-left: 1px; padding: 0 4px 0 1px; background: linear-gradient(#e3e3e3, #bdbdbd); border: 1px solid #777; color: #222; }
.workspace .s10 { color: #555; }
.qat .more { width: 9px; height: 12px; background: #6c6c6c; border: 1px solid #444; }
.title { flex: 1; padding-left: 6px; text-align: center; line-height: 10px; color: #06142a; text-shadow: 0 0 3px #8fbcec, 0 0 5px #7fb4ea, 0 0 7px #7fb4ea; }
.info { width: 257px; }
.info > button { width: 14px; height: 14px; }
.info .expand { width: 8px; background: #5c5c5c; }
.info .search { flex: 1; min-width: 0; height: 12px; padding: 0 2px; background: #f2f2f2; border: 1px solid #999; font-style: italic; }
.search::placeholder { color: #777; }
.info .signin { width: 65px; gap: 3px; color: #f2f2f2; justify-content: flex-start; padding-left: 2px; }
.info .wide { width: 24px; gap: 4px; }
.winbtns { display: flex; width: 71px; padding-left: 12px; margin-top: -4px; }
.winbtns button { width: 16px; height: 10px; color: #fff; background: linear-gradient(#4b8ccc, #2163ab); border: 1px solid #14427c; border-top: 0; }
.winbtns .close { width: 26px; }
.tabs { display: flex; align-items: center; gap: 1px; height: 11px; color: #e2e2e2; line-height: 11px; padding-left: 3px; }
.tabs a { padding: 0 5px; white-space: nowrap; }
.tabs .on { background: #ebebeb; color: #222; }
.ribmin { gap: 3px; margin-left: 14px; }
.pill { width: 8px; height: 5px; border-radius: 1px; background: #e6e6e6; display: grid; place-items: center; }
.dot { width: 2px; height: 2px; background: #444; }

/* ribbon */
.ribbon { display: flex; height: 57px; background: linear-gradient(#8e8e8e, #777); padding-right: 10px; }
.panel { display: flex; flex-direction: column; min-width: 0; background: #fafafa; border-right: 1px solid #bbb; }
.draw { flex: 130; } .modify { flex: 77; } .layers { flex: 124; } .anno { flex: 49; } .block { flex: 47; }
.props { flex: 93; } .groups { flex: 40; } .utils { flex: 56; } .clip { flex: 46; }
.panel .body { flex: 1; display: flex; justify-content: space-between; padding: 3px 2px 0; min-width: 0; }
.panel h2 { height: 10px; line-height: 9px; background: #e4e4e4; text-align: center; color: #444; white-space: nowrap; }
.panel .launcher { display: flex; align-items: center; padding-right: 2px; }
.launcher span { flex: 1; }
.bigs { display: flex; flex: 1; justify-content: space-between; padding: 0 5px 0 2px; }
.big { flex-direction: column; justify-content: flex-start; height: 40px; padding-top: 1px; color: #444; line-height: 12px; }
.body > .big { flex: 1; }
.big .s20 { margin: 1px 0; }
.glyph { font: bold 19px/20px "Liberation Sans", sans-serif; color: #333; height: 20px; }
.col { display: flex; flex-direction: column; gap: 1px; }
.grow { flex: 1; min-width: 0; }
.sm { height: 13px; width: 13px; background: #f1f1f1; border: 1px solid #ddd; }
.sm.split { width: 20px; gap: 2px; padding-right: 1px; }
.sm.active { background: #a9d0f3; border-color: #3f8ad0; }
.lrow { display: flex; justify-content: space-between; }
.pair { display: flex; }
.combo { display: flex; align-items: center; gap: 1px; flex: 1; height: 13px; min-width: 0; padding: 0 3px 0 1px; background: #f3f3f3; border: 1px solid #d2d2d2; }
.swatch { width: 9px; height: 9px; background: #fff; border: 1px solid #444; margin: 0 1px; }
.col > .combo { flex: none; }
.prow { display: flex; align-items: center; gap: 2px; }
.rule { width: 36px; height: 1px; background: #444; margin-left: 3px; margin-right: 1px; }
.props .body, .layers .body, .groups .body { padding-left: 1px; padding-right: 1px; }

/* drawing tabs */
.filetabs { display: flex; align-items: center; height: 20px; padding: 0 0 1px 9px; background: linear-gradient(#868686, #a0a0a0 80%, #555 82%, #666); }
.filetab { position: relative; display: flex; align-items: center; justify-content: space-between; width: 80px; height: 13px; padding: 0 9px; color: #222; }
.filetab span, .filetab .s8 { position: relative; }
.filetab .s8 { width: 6px; height: 6px; color: #777; }
.tabshape { position: absolute; left: 0; top: 0; width: 100%; height: 100%; }
.newtab { width: 13px; height: 9px; color: #444; background: #777; border: 1px solid #555; border-radius: 2px 5px 2px 5px; }

/* work area */
.work { flex: 1; min-height: 0; display: flex; background: #686868; }
.palette { width: 98px; margin-right: 3px; display: flex; flex-direction: column; background: #f0f0f0; }
.phead { height: 12px; line-height: 12px; padding-left: 4px; color: #222; background: #a4a4a4; border-left: 3px double #777; }
.pbody { flex: 1; min-height: 0; display: flex; padding-bottom: 3px; }
.feed { flex: 1; min-width: 0; overflow: hidden; padding: 7px 5px 0; display: flex; flex-direction: column; }
.settings { width: 20px; height: 15px; gap: 3px; border: 1px solid #d8d8d8; color: #ccc; align-self: flex-start; }
.settings .caret { border-top-color: #aaa; }
.post { height: 21px; flex: none; width: 100%; resize: none; overflow: hidden; margin-top: 5px; padding: 1px 2px; border: 1px solid #ccc; background: #f5f5f5; }
.post::placeholder { color: #aaa; }
.tools { display: flex; gap: 6px; margin: 7px 0 12px; color: #b5b5b5; }
.card { flex: none; background: #fff; border: 1px solid #bbb; padding: 9px 5px 0 6px; color: #333; font: 8px/10px "Open Sans", sans-serif; white-space: nowrap; }
.card a { color: #3a3ac0; text-decoration: underline; }
.card hr { border: 0; border-top: 1px solid #ccc; margin: 10px 0 8px; }
.typing { width: 60px; border: 1px solid #aaa; padding: 3px 1px 0; margin-bottom: 8px; }
.bubble { height: 14px; line-height: 12px; border: 1px solid #ccc; border-right: 2px solid #4aa0e8; padding-left: 1px; color: #2a8ae0; font-size: 7px; margin-bottom: 4px; }
.keys { width: 56px; height: 23px; }
.scroll { width: 10px; margin-top: 28px; display: flex; flex-direction: column; align-items: center; background: #f4f4f4; }
.scroll .up { margin: 3px 0; }
.thumb { width: 9px; height: 104px; border: 1px solid #aaa; border-radius: 1px; background: linear-gradient(#666, #666) center 48px / 4px 1px no-repeat, linear-gradient(#666, #666) center 50px / 4px 1px no-repeat, linear-gradient(#666, #666) center 52px / 4px 1px no-repeat, linear-gradient(90deg, #fafafa, #cfcfcf); }
.scroll > .caret { margin: auto 0 6px; }

/* drawing canvas: items float over the model space */
.stage { flex: 1; min-width: 0; display: flex; flex-direction: column; padding-right: 1px; }
.canvas { flex: 1; min-height: 0; position: relative; overflow: hidden; background: #212832; }
.gridlines { position: absolute; inset: 0; width: 100%; height: 100%; }
.viewlabel { position: absolute; left: 2px; top: 3px; color: #e4e4e4; font-weight: 500; }
.viewbtns { position: absolute; right: 5px; top: 5px; display: flex; gap: 4px; color: #eee; }
.cube { position: absolute; right: 6px; top: 18px; width: 52px; height: 54px; }
.cube text { text-anchor: middle; font-family: "Liberation Sans", sans-serif; }
.face { font-size: 5px; font-weight: 700; fill: #444; }
.dir { font-size: 8px; font-weight: 700; fill: #b4b7ba; }
.wcs { position: absolute; right: 18px; top: 78px; width: 28px; height: 10px; justify-content: flex-start; padding-left: 3px; border: 1px solid #9a9da5; border-radius: 3px; background: #7f838d; color: #c4c7cc; }
.navbar { position: absolute; right: 2px; top: 103px; width: 19px; height: 122px; padding: 9px 0; display: flex; flex-direction: column; align-items: center; justify-content: space-between; background: #60646b; border: 1px solid #6f737a; border-radius: 3px; }
.navbar .caret { border-top-color: #3c4046; }
.knob { position: absolute; right: 2px; width: 4px; height: 4px; border: 1px solid #43474e; border-radius: 50%; }
.knob.top { top: 1px; } .knob.bottom { bottom: 1px; }
.cursor { position: absolute; left: 255px; top: 102px; width: 41px; height: 41px; }
.ucs { position: absolute; left: 4px; bottom: 2px; width: 46px; height: 46px; }
.command { position: absolute; left: 20%; right: 20%; bottom: 0; height: 15px; display: flex; align-items: center; gap: 3px; padding-right: 3px; background: #bdbfc1; }
.command input { flex: 1; min-width: 0; font: italic 7px "DejaVu Sans Mono", monospace; }
.command input::placeholder { color: #6d6d6d; }
.cgrip { align-self: stretch; width: 31px; display: flex; align-items: center; justify-content: space-between; padding: 0 3px; background: linear-gradient(#5b5b5b, #3a3a3a); color: #ddd; }
.dots { width: 4px; height: 10px; background: repeating-linear-gradient(#888 0 1px, #444 1px 2px); }

/* layout tabs */
.layouts { display: flex; align-items: center; height: 11px; background: #f2f2f2; color: #222; line-height: 11px; }
.layouts button { width: 9px; height: 11px; border-right: 1px solid #ccc; }
.layouts a { padding: 0 3px; }
.layouts .model { padding: 0 6px; background: #212832; color: #fff; clip-path: polygon(0 0, 100% 0, calc(100% - 4px) 100%, 4px 100%); }
.slash { width: 4px; height: 11px; background: linear-gradient(110deg, transparent 40%, #444 42%, #444 58%, transparent 60%); }

/* status bar */
.status { display: flex; height: 13px; background: linear-gradient(#a0a0a0, #6f6f6f); border-top: 1px solid #555; }
.coords { width: 113px; padding-left: 7px; font-size: 6px; line-height: 12px; color: #111; background: linear-gradient(#8a8a8a, #707070); }
.toggles { display: grid; grid-template-columns: repeat(15, 1fr); width: 191px; }
.toggles button { background: linear-gradient(#c9c9c9, #a8a8a8); border-right: 1px solid #777; }
.toggles .on { background: linear-gradient(#d9edf6, #9fcfe4); }
.right { margin-left: auto; display: flex; }
.right button { width: 12px; background: linear-gradient(#bdbdbd, #949494); border-right: 1px solid #777; color: #333; }
.right .mode { width: 26px; color: #222; }
.right .ratio { width: 29px; gap: 1px; }
.right .off { color: #888; }
.right .menu { width: 7px; }
.gap { width: 4px; background: #6a6a6a; }
.tray { display: flex; align-items: center; justify-content: space-evenly; width: 32px; margin: 1px 2px; border: 1px solid #555; background: #808080; }
.screen { width: 8px; height: 8px; border: 1px solid #333; border-top-width: 2px; background: #f5f5f5; }
.grip { width: 9px; background: radial-gradient(circle, #bbb 0 1px, transparent 1px) 0 0 / 3px 3px; }
```
